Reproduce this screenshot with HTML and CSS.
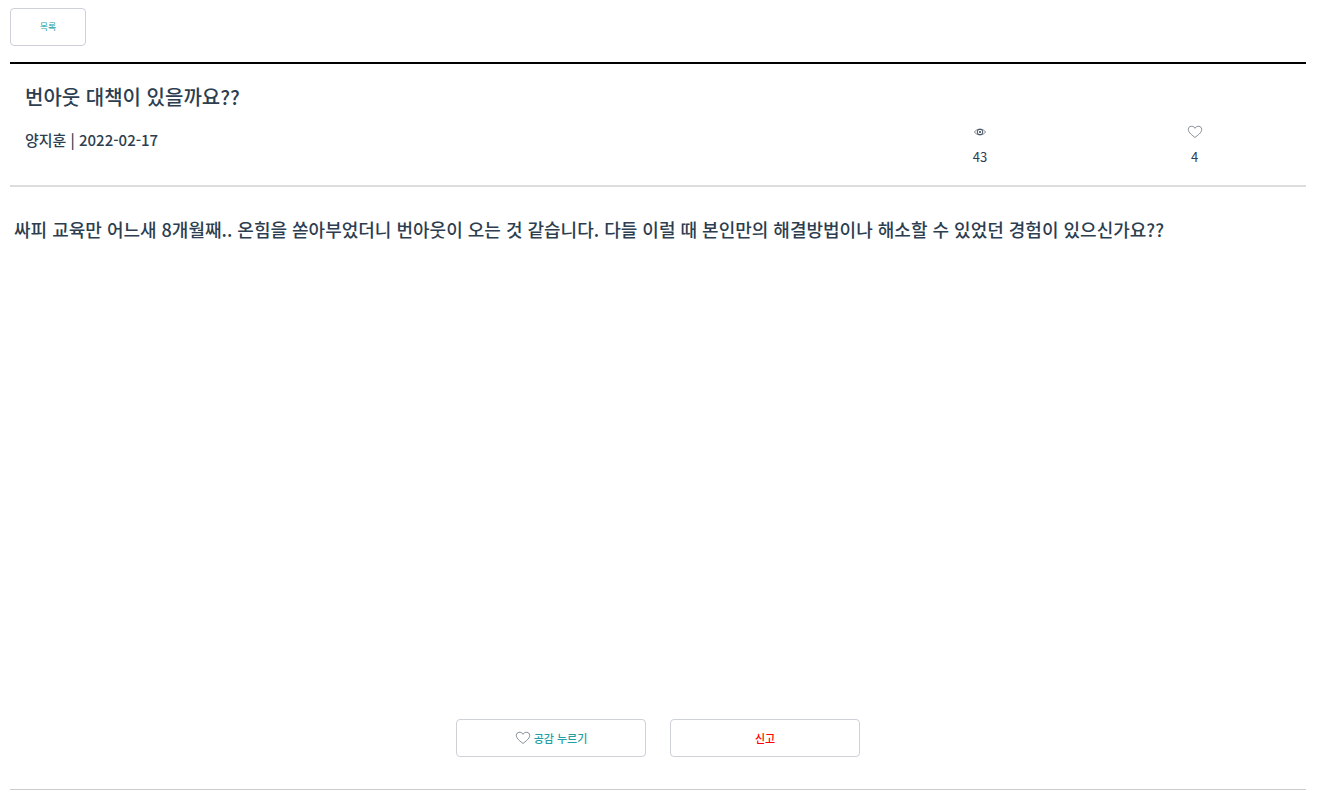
FILE: index.html
```
<!DOCTYPE html>
<html lang="ko">
<head>
<meta charset="utf-8">
<title>번아웃 대책이 있을까요??</title>
<link rel="stylesheet" href="styles.css">
</head>
<body>
<main class="board">
  <button class="btn btn-list" type="button">목록</button>
  <article class="post">
    <header class="post-header">
      <h1 class="post-title">번아웃 대책이 있을까요??</h1>
      <div class="post-info">
        <p class="post-meta">양지훈 | 2022-02-17</p>
        <div class="stat">
          <svg class="stat-icon" viewBox="0 0 16 14" aria-hidden="true">
            <path d="M2.500 7C4.500 3.200 11.500 3.200 13.500 7C11.500 10.800 4.500 10.800 2.500 7Z" fill="none" stroke="#2c3e50" stroke-width=".6"/>
            <circle cx="8" cy="7" r="2.800" fill="none" stroke="#2c3e50" stroke-width=".9"/>
            <circle cx="8" cy="7" r="1" fill="#2c3e50"/>
          </svg>
          <span>43</span>
        </div>
        <div class="stat">
          <svg class="stat-icon" viewBox="0 0 16 14" aria-hidden="true">
            <path class="heart" d="M8 12.500C5.500 10.300 1.300 7.800 1.300 4.300C1.300 .8 6.500 .1 8 3.300C9.500 .1 14.700 .8 14.700 4.300C14.700 7.800 10.500 10.300 8 12.500Z"/>
          </svg>
          <span>4</span>
        </div>
      </div>
    </header>
    <p class="post-content">싸피 교육만 어느새 8개월째.. 온힘을 쏟아부었더니 번아웃이 오는 것 같습니다. 다들 이럴 때 본인만의 해결방법이나 해소할 수 있었던 경험이 있으신가요??</p>
    <div class="actions">
      <button class="btn btn-like" type="button">
        <svg class="stat-icon" viewBox="0 0 16 14" aria-hidden="true">
          <path class="heart" d="M8 12.500C5.500 10.300 1.300 7.800 1.300 4.300C1.300 .8 6.500 .1 8 3.300C9.500 .1 14.700 .8 14.700 4.300C14.700 7.800 10.500 10.300 8 12.500Z"/>
        </svg>
        <span>공감 누르기</span>
      </button>
      <button class="btn btn-report" type="button">신고</button>
    </div>
  </article>
</main>
</body>
</html>
```
FILE: styles.css
```
* { box-sizing: border-box; }
body {
  margin: 0;
  background: #fff;
  color: #2c3e50;
  font-family: "Noto Sans CJK KR", "Noto Sans", sans-serif;
}
.board { padding: 8px 14px 0 10px; }
.btn {
  display: flex;
  align-items: center;
  justify-content: center;
  gap: 3px;
  height: 38px;
  padding: 0 12px;
  border: 1px solid #ced0da;
  border-radius: 4px;
  background: #fff;
  color: #20a0a4;
  font-family: inherit;
  font-size: 11px;
  line-height: 16px;
  cursor: pointer;
}
.btn-list { width: 76px; font-size: 9px; }
.post {
  margin-top: 16px;
  border-top: 2px solid #000;
  border-bottom: 1px solid #ccc;
}
.post-header {
  padding: 18px 4px;
  border-bottom: 2px solid #ddd;
}
.post-title {
  margin: 0;
  padding-left: 11px;
  font-size: 20px;
  font-weight: 500;
  line-height: 30px;
}
.post-info {
  display: grid;
  grid-template-columns: 4fr 1fr 1fr;
  margin-top: 8px;
}
.post-meta {
  margin: 0;
  padding: 8px 0 0 11px;
  font-size: 15px;
  font-weight: 500;
  line-height: 24px;
}
.stat {
  display: flex;
  flex-direction: column;
  align-items: center;
  gap: 8px;
  padding-top: 5px;
  font-size: 13px;
  line-height: 20px;
}
.stat-icon { width: 16px; height: 14px; flex: none; }
.heart { fill: none; stroke: #52606d; stroke-width: .7; }
.post-content {
  min-height: 500px;
  margin: 0;
  padding: 27px 4px 0;
  font-size: 18px;
  font-weight: 500;
  line-height: 30px;
}
.actions {
  display: flex;
  justify-content: center;
  gap: 24px;
  padding: 32px 0;
}
.btn-like, .btn-report { width: 190px; font-weight: 500; }
.btn-report { color: #f00; }
```
